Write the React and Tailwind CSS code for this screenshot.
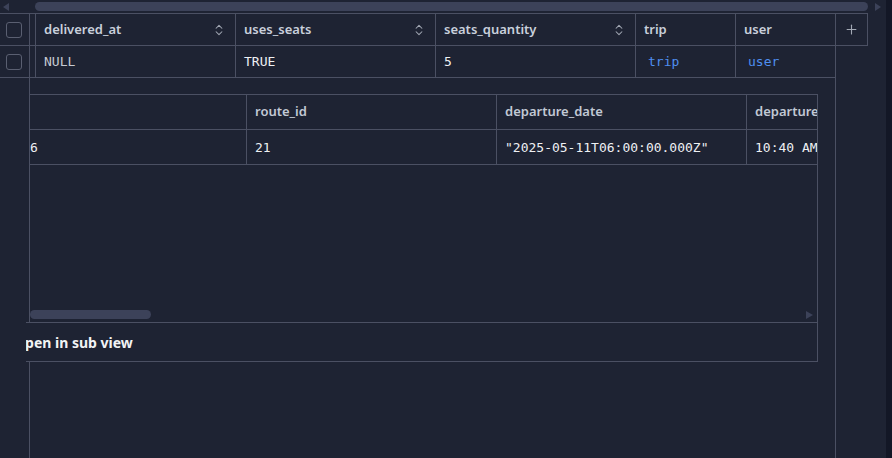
import React from 'react';
import { ChevronsUpDown, Plus } from 'lucide-react';

const sans = { fontFamily: '"Noto Sans", "Open Sans", sans-serif' };

function Checkbox() {
  return <div className="w-4 h-4 rounded-[3px] border border-[#5a5f71]" />;
}

function HeadCell({ w, label, sort }) {
  return (
    <div className={`${w} shrink-0 h-full border-r border-[#4b5063] flex items-center justify-between pl-2 pr-[9px]`}>
      <span className="text-[13px] font-semibold text-[#c9d0dc]">{label}</span>
      {sort && <ChevronsUpDown size={14} strokeWidth={1.75} className="text-[#a3a9b5]" />}
    </div>
  );
}

function Cell({ w, children, cls = 'text-[#eef0f3]', pad = 'pl-2' }) {
  return (
    <div className={`${w} shrink-0 h-full border-r border-[#4b5063] flex items-center pt-px ${pad} text-[13px] ${cls}`}>
      {children}
    </div>
  );
}

export default function App() {
  const mono = { fontFamily: '"DejaVu Sans Mono", "Liberation Mono", monospace' };
  return (
    <div className="w-[892px] h-[458px] bg-[#1e2333] flex overflow-hidden" style={sans}>
      <div className="w-[886px] flex flex-col">
        {/* top scroll bar */}
        <div className="h-[13px] shrink-0 flex items-center">
          <div className="w-[35px] flex pl-[3px]">
            <div className="w-0 h-0 border-y-[4px] border-y-transparent border-r-[6px] border-r-[#3c4259]" />
          </div>
          <div className="w-[833px] h-[9px] rounded-full bg-[#3c4259]" />
          <div className="flex-1 flex pl-[7px]">
            <div className="w-0 h-0 border-y-[4px] border-y-transparent border-l-[6px] border-l-[#3c4259]" />
          </div>
        </div>

        {/* header row */}
        <div className="h-[33px] shrink-0 flex">
          <div className="flex h-full border-y border-[#4b5063]">
            <div className="w-[30px] h-full border-r border-[#4b5063] flex items-center justify-center pr-px">
              <Checkbox />
            </div>
            <div className="w-[6px] h-full border-r border-[#4b5063]" />
            <HeadCell w="w-[200px]" label="delivered_at" sort />
            <HeadCell w="w-[200px]" label="uses_seats" sort />
            <HeadCell w="w-[200px]" label="seats_quantity" sort />
            <HeadCell w="w-[100px]" label="trip" />
            <HeadCell w="w-[100px]" label="user" />
            <div className="w-[32px] h-full border-r border-[#4b5063] flex items-center justify-center">
              <Plus size={15} strokeWidth={1.75} className="text-[#a3a9b5]" />
            </div>
          </div>
        </div>

        {/* data row */}
        <div className="h-[32px] shrink-0 flex">
          <div className="flex h-full border-b border-[#4b5063]" style={mono}>
            <div className="w-[30px] h-full border-r border-[#4b5063] flex items-center justify-center pr-px">
              <Checkbox />
            </div>
            <div className="w-[6px] h-full border-r border-[#4b5063]" />
            <Cell w="w-[200px]" cls="text-[#c6cad2]">NULL</Cell>
            <Cell w="w-[200px]">TRUE</Cell>
            <Cell w="w-[200px]">5</Cell>
            <Cell w="w-[100px]" cls="text-[#4f8ff0]" pad="pl-3">trip</Cell>
            <Cell w="w-[100px]" cls="text-[#4f8ff0]" pad="pl-3">user</Cell>
          </div>
        </div>

        {/* sub view area */}
        <div className="flex-1 flex">
          <div className="w-[30px] shrink-0 border-r border-[#4b5063]" />
          <div className="w-[806px] shrink-0 border-r border-[#4b5063] pt-4">
            <div className="w-[788px] border-t border-r border-[#4b5063] flex flex-col">
              <div className="h-[227px] relative overflow-hidden">
                <div className="flex h-[35px] border-b border-[#4b5063] w-[900px]">
                  <div className="w-[217px] h-full border-r border-[#4b5063]" />
                  <div className="w-[250px] h-full border-r border-[#4b5063] flex items-center pl-2 text-[13px] font-semibold text-[#c2c9d5]">route_id</div>
                  <div className="w-[250px] h-full border-r border-[#4b5063] flex items-center pl-2 text-[13px] font-semibold text-[#c2c9d5]">departure_date</div>
                  <div className="w-[180px] h-full flex items-center pl-2 text-[13px] font-semibold text-[#c2c9d5]">departure_time</div>
                </div>
                <div className="flex h-[35px] border-b border-[#4b5063] w-[900px] text-[13px] text-[#eef0f3]" style={mono}>
                  <div className="w-[217px] h-full border-r border-[#4b5063] flex items-center pt-px">6</div>
                  <div className="w-[250px] h-full border-r border-[#4b5063] flex items-center pt-px pl-2">21</div>
                  <div className="w-[250px] h-full border-r border-[#4b5063] flex items-center pt-px pl-2">"2025-05-11T06:00:00.000Z"</div>
                  <div className="w-[180px] h-full flex items-center pt-px pl-2">10:40 AM</div>
                </div>
                {/* sub scroll bar */}
                <div className="absolute left-0 right-0 top-[215px] h-[9px] flex items-center">
                  <div className="w-[121px] h-[9px] rounded-full bg-[#3c4259]" />
                  <div className="ml-auto mr-[4px] w-0 h-0 border-y-[4px] border-y-transparent border-l-[7px] border-l-[#3c4259]" />
                </div>
              </div>
              <div className="-ml-[4px] h-[40px] border-y border-[#4b5063] bg-[#1e2333] relative overflow-hidden flex items-center">
                <span className="-ml-[12px] text-[14px] font-bold text-[#f2f3f5] whitespace-nowrap">Open in sub view</span>
              </div>
            </div>
          </div>
        </div>
      </div>
      <div className="w-[6px] bg-[#131726]" />
    </div>
  );
}
